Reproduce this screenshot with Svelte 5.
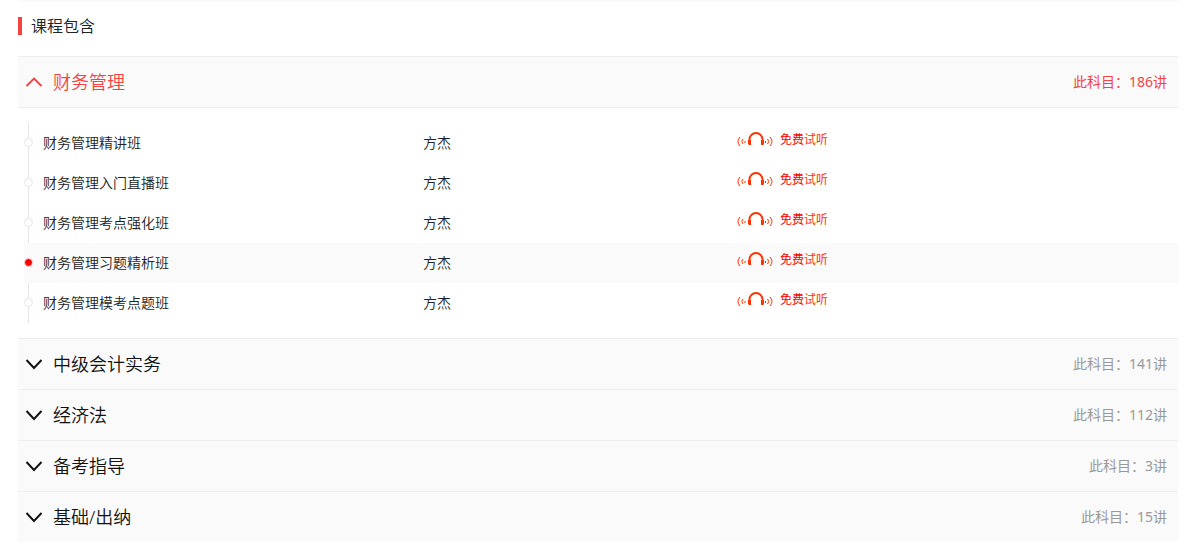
<script lang="ts">
  let subjects = [
    {
      name: "财务管理",
      total: 186,
      classes: [
        { name: "财务管理精讲班", teacher: "方杰" },
        { name: "财务管理入门直播班", teacher: "方杰" },
        { name: "财务管理考点强化班", teacher: "方杰" },
        { name: "财务管理习题精析班", teacher: "方杰" },
        { name: "财务管理模考点题班", teacher: "方杰" },
      ],
    },
    { name: "中级会计实务", total: 141, classes: [] },
    { name: "经济法", total: 112, classes: [] },
    { name: "备考指导", total: 3, classes: [] },
    { name: "基础/出纳", total: 15, classes: [] },
  ];

  let open_subject = 0;
  let active_class = 3;

  function toggle(i: number) {
    open_subject = open_subject === i ? -1 : i;
  }
</script>

<section class="courses">
  <h2>课程包含</h2>

  {#each subjects as { name, total, classes }, i}
    <div class="subject" class:open={open_subject === i}>
      <h3>
        <button
          type="button"
          aria-expanded={open_subject === i}
          on:click={() => toggle(i)}
        >
          <svg class="arrow" viewBox="0 0 18 12" aria-hidden="true">
            {#if open_subject === i}
              <path d="M1.5 10 9 2.5 16.5 10" />
            {:else}
              <path d="M1.5 2 9 10 16.5 2" />
            {/if}
          </svg>
          <span class="name">{name}</span>
          <span class="total">此科目：{total}讲</span>
        </button>
      </h3>

      {#if open_subject === i && classes.length}
        <ul>
          {#each classes as item, j}
            <li
              class:active={active_class === j}
              on:mouseenter={() => (active_class = j)}
            >
              <span class="dot"></span>
              <span class="text">{item.name}</span>
              <span class="text">{item.teacher}</span>
              <a href="#listen">
                <svg class="headphones" viewBox="0 0 36 14" aria-hidden="true">
                  <path class="band" d="M12.5 9V7.5a6.500 6.500 0 0 1 13 0V9" />
                  <path class="cup" d="M11 8h3v5h-2l-1-1zM24 8h3v4l-1 1h-2z" />
                  <path
                    class="wave"
                    d="M3 5Q-1 9.500 3 14M6 7Q3.500 9.500 6 12M33 5Q37 9.500 33 14M30.500 7Q33 9.500 30.500 12M8 9v2M28.500 9v2"
                  />
                </svg>
                <span><em>免费</em>试听</span>
              </a>
            </li>
          {/each}
        </ul>
      {/if}
    </div>
  {/each}
</section>

<style>
  :global(body) {
    background: #fff;
    color: #222;
    font-family: "Noto Sans", "Noto Sans CJK SC", sans-serif;
    font-size: 14px;
    font-weight: 350;
  }

  .courses {
    margin: 0 10px 0 18px;
    border-top: 2px solid #fafafa;
  }

  h2 {
    display: flex;
    align-items: center;
    gap: 9px;
    height: 54px;
    margin: 0;
    padding-bottom: 6px;
    box-sizing: border-box;
    font-size: 16px;
    font-weight: 350;
    line-height: 24px;
  }
  h2::before {
    content: "";
    width: 4px;
    height: 18px;
    background: #f54343;
  }

  h3 {
    margin: 0;
  }

  button {
    display: flex;
    align-items: center;
    width: 100%;
    height: 51px;
    padding: 0 11px 0 7px;
    border: 0;
    border-top: 1px solid #eee;
    background: #fafafa;
    color: #111;
    font-family: inherit;
    font-size: 18px;
    font-weight: 350;
    line-height: 26px;
    text-align: left;
    cursor: pointer;
  }

  .arrow {
    width: 18px;
    height: 12px;
    margin-right: 10px;
    fill: none;
    stroke: currentColor;
    stroke-width: 1.9;
  }
  .total {
    margin-left: auto;
    color: #999;
    font-size: 14px;
    font-weight: 400;
  }

  .open button {
    height: 52px;
    border-bottom: 1px solid #eee;
  }
  .open button,
  .open .total {
    color: #f54343;
  }

  ul {
    margin: 0;
    padding: 15px 0 15px 6px;
    list-style: none;
  }
  li {
    position: relative;
    display: grid;
    grid-template-columns: 380fr 314fr 441fr;
    align-items: center;
    height: 40px;
    padding-left: 19px;
  }
  li::before {
    content: "";
    position: absolute;
    top: 0;
    bottom: 0;
    left: 4px;
    width: 1px;
    background: #e6e6e6;
  }
  li.active {
    background: #fafafa;
  }
  li.active::before {
    display: none;
  }

  .text {
    line-height: 20px;
  }

  .dot {
    position: absolute;
    top: 15px;
    left: 0;
    width: 9px;
    height: 9px;
    box-sizing: border-box;
    border: 1px solid #e6e6e6;
    border-radius: 50%;
    background: #fff;
  }
  .active .dot {
    background: #f00;
  }

  a {
    display: flex;
    align-items: center;
    gap: 7px;
    padding-bottom: 8px;
    color: #f30;
    font-size: 12px;
    font-weight: 400;
    line-height: 16px;
    text-decoration: none;
  }
  a span {
    padding-top: 2px;
  }
  em {
    color: #f00;
    font-style: normal;
  }

  .headphones {
    width: 36px;
    height: 14px;
    fill: none;
    stroke: #f30;
  }
  .band {
    stroke-width: 2;
  }
  .cup {
    fill: #f30;
    stroke: none;
  }
  .wave {
    stroke-width: 1;
  }
</style>
